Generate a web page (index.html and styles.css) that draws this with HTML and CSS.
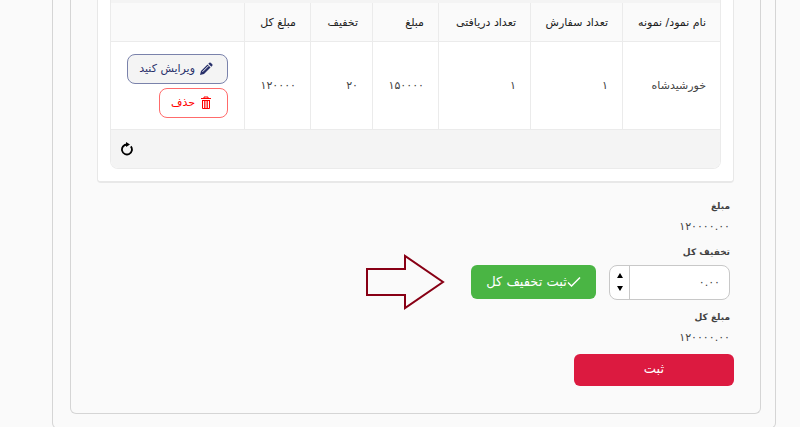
FILE: index.html
```
<!DOCTYPE html>
<html lang="fa" dir="rtl">
  <head>
    <meta charset="UTF-8" />
    <meta name="viewport" content="width=device-width, initial-scale=1.0" />
    <title>ثبت تخفیف کل</title>
    <link rel="stylesheet" href="styles.css">
  </head>
  <body>
    <div class="outer">
      <div class="inner">
        <div class="card">
          <div class="grid">
            <div class="toolbar"></div>
            <table>
              <colgroup>
                <col class="col-name" />
                <col class="col-count" />
                <col class="col-count" />
                <col class="col-price" />
                <col class="col-off" />
                <col class="col-price" />
                <col />
              </colgroup>
              <thead>
                <tr>
                  <th>نام نمود/ نمونه</th>
                  <th>تعداد سفارش</th>
                  <th>تعداد دریافتی</th>
                  <th>مبلغ</th>
                  <th>تخفیف</th>
                  <th>مبلغ کل</th>
                  <th></th>
                </tr>
              </thead>
              <tbody>
                <tr>
                  <td>خورشیدشاه</td>
                  <td>۱</td>
                  <td>۱</td>
                  <td>۱۵۰۰۰۰</td>
                  <td>۲۰</td>
                  <td>۱۲۰۰۰۰</td>
                  <td class="actions">
                    <button type="button" class="btn edit">
                      <svg width="14" height="14" viewBox="0 0 14 14">
                        <path d="M1 13l1-4 6.500-6.500 3 3L5 12z" fill="currentColor" />
                        <path d="M9.300 1.700l1-1q.7-.5 1.400 0l1.600 1.600q.5.700 0 1.400l-1 1z" fill="currentColor" />
                        <path d="M3.500 9.800l6-6" stroke="#f4f4f4" />
                      </svg>
                      <span>ویرایش کنید</span>
                    </button>
                    <button type="button" class="btn delete">
                      <svg width="14" height="14" viewBox="0 0 14 14">
                        <path d="M5 2V1h4v1M2 2.500h10" fill="none" stroke="currentColor" />
                        <path d="M3 4.500h8M3.500 4v8.500h7V4" fill="none" stroke="currentColor" />
                        <path d="M5.500 4v8M7 4v8M8.500 4v8" stroke="currentColor" stroke-width=".8" />
                      </svg>
                      <span>حذف</span>
                    </button>
                  </td>
                </tr>
              </tbody>
            </table>
            <div class="pager">
              <button type="button" class="refresh" aria-label="بارگذاری مجدد">
                <svg width="14" height="14" viewBox="0 0 14 14">
                  <path d="M10.800 4.300A5 5 0 1 1 7 2.500" fill="none" stroke="currentColor" stroke-width="1.800" />
                  <path d="M6 0l4 2.500-4 2.500z" fill="currentColor" />
                </svg>
              </button>
            </div>
          </div>
        </div>

        <form class="summary">
          <div class="title">مبلغ</div>
          <div class="value">۱۲۰۰۰۰.۰۰</div>
          <label class="title" for="discount">تخفیف کل</label>
          <div class="row">
            <div class="number">
              <input type="text" id="discount" value="۰.۰۰" />
              <div class="spin">
                <button type="button" aria-label="افزایش">
                  <svg width="6" height="5" viewBox="0 0 6 5"><path d="M3 0l3 5H0z" /></svg>
                </button>
                <button type="button" aria-label="کاهش">
                  <svg width="6" height="5" viewBox="0 0 6 5"><path d="M0 0h6L3 5z" /></svg>
                </button>
              </div>
            </div>
            <button type="button" class="apply">
              <svg width="14" height="12" viewBox="0 0 14 12">
                <path d="M1 7.500L4.500 11 13 2.500" fill="none" stroke="currentColor" stroke-width="1.500" />
              </svg>
              <span>ثبت تخفیف کل</span>
            </button>
            <svg class="arrow" width="80" height="56" viewBox="0 0 80 56">
              <path d="M2 15H40V2L78 28 40 54V41H2z" fill="none" stroke="#880015" stroke-width="2" />
            </svg>
          </div>
          <div class="title">مبلغ کل</div>
          <div class="value">۱۲۰۰۰۰.۰۰</div>
          <button type="submit" class="submit">ثبت</button>
        </form>
      </div>
    </div>
  </body>
</html>
```

FILE: styles.css
```
* {
  box-sizing: border-box;
}
body {
  margin: 0;
  background: #fafafa;
  color: #424242;
  font-family: "DejaVu Sans", sans-serif;
  font-size: 11px;
}
button,
input {
  font-family: inherit;
  color: inherit;
}
button {
  cursor: pointer;
}
.outer {
  margin: 0 24px 0 52px;
  padding: 0 14px 14px 17px;
  border: 1px solid #d5d5d5;
  border-top: 0;
  border-radius: 0 0 6px 6px;
}
.inner {
  padding: 0 26px;
  padding-bottom: 27px;
  border: 1px solid #d5d5d5;
  border-top: 0;
  border-radius: 0 0 6px 6px;
}
.card {
  padding: 0 12px 12px;
  background: #fff;
  border: 1px solid #e8e8e8;
  border-top: 0;
  border-bottom-width: 2px;
  border-radius: 0 0 4px 4px;
}
.grid {
  border: 1px solid #ebebeb;
  border-top: 0;
  border-radius: 0 0 8px 8px;
  overflow: hidden;
}
.toolbar {
  height: 3px;
  background: #f4f4f4;
}
table {
  width: 100%;
  table-layout: fixed;
  border-collapse: separate;
  border-spacing: 0;
}
.col-name {
  width: 98px;
}
.col-count {
  width: 92px;
}
.col-price {
  width: 66px;
}
.col-off {
  width: 62px;
}
th,
td {
  padding: 0 14px 0 0;
  text-align: right;
  white-space: nowrap;
  border-left: 1px solid #ebebeb;
  border-bottom: 1px solid #ebebeb;
}
th:last-child,
td:last-child {
  border-left: 0;
}
th {
  height: 39px;
  background: #fafafa;
  color: #212121;
  font-weight: normal;
}
td {
  height: 88px;
  background: #fff;
}
.actions {
  padding-right: 16px;
}
.btn {
  display: flex;
  align-items: center;
  gap: 4px;
  height: 30px;
  padding: 0 14px 0 11px;
  border: 1px solid;
  border-radius: 8px;
  font-size: 11px;
}
.edit {
  margin-bottom: 4px;
  background: #f4f4f4;
  border-color: #7a82ab;
  color: #28306a;
}
.delete {
  background: #fff;
  border-color: #ff6b6b;
  color: #f00;
}
.pager {
  display: flex;
  justify-content: flex-end;
  align-items: center;
  height: 38px;
  padding-left: 9px;
  background: #f4f4f4;
}
.refresh {
  padding: 0;
  border: 0;
  background: none;
  color: #000;
  line-height: 0;
}
.summary {
  padding-top: 14px;
}
.title {
  display: block;
  padding-right: 4px;
  line-height: 18px;
  font-size: 9px;
  font-weight: bold;
}
.value {
  margin-bottom: 4px;
  padding-right: 4px;
  line-height: 24px;
}
.row {
  display: flex;
  align-items: center;
  margin: 3px 4px 8px 0;
}
.number {
  display: flex;
  width: 121px;
  height: 35px;
  background: #fff;
  border: 1px solid #c8c8c8;
  border-radius: 8px;
  overflow: hidden;
}
.number input {
  flex: 1;
  min-width: 0;
  padding: 0 9px;
  border: 0;
  outline: none;
  background: none;
  font-size: 11px;
}
.spin {
  display: flex;
  flex-direction: column;
  justify-content: center;
  width: 20px;
  border-right: 1px solid #c8c8c8;
}
.spin button {
  height: 13px;
  padding: 0;
  border: 0;
  background: none;
  line-height: 0;
}
.apply {
  display: flex;
  justify-content: center;
  align-items: center;
  width: 125px;
  height: 34px;
  margin: 0 13px 0 26px;
  padding: 0 0 2px;
  border: 0;
  border-radius: 6px;
  background: #4ab544;
  color: #fff;
  font-size: 13px;
  white-space: nowrap;
}
.arrow {
  margin: -10px 0;
}
.submit {
  width: 160px;
  height: 32px;
  padding: 0 0 4px;
  border: 0;
  border-radius: 6px;
  background: #dc1a40;
  color: #fff;
  font-size: 13px;
}
```
